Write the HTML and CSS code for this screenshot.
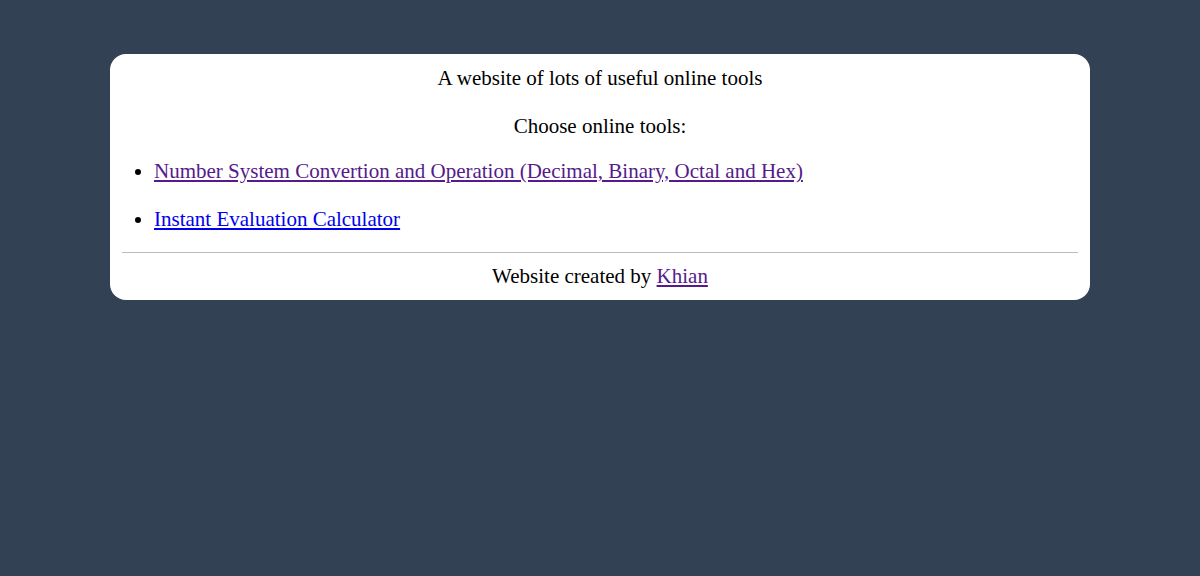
FILE: index.html
```html
<!DOCTYPE html>
<html>
<head>
<meta charset="utf-8">
<link rel="stylesheet" href="styles.css">
</head>
<body>
<div class="card">
  <p class="center">A website of lots of useful online tools</p>
  <p class="center choose">Choose online tools:</p>
  <ul class="tools">
    <li><a class="visited" href="#">Number System Convertion and Operation (Decimal, Binary, Octal and Hex)</a></li>
    <li><a class="link" href="#">Instant Evaluation Calculator</a></li>
  </ul>
  <hr class="rule">
  <div class="footer">Website created by <a class="visited" href="#">Khian</a></div>
</div>
</body>
</html>
```
FILE: styles.css
```css
html, body {
  margin: 0;
  padding: 0;
  background: #334155;
}
body {
  padding: 54px 110px;
  font-family: "Liberation Serif", "Times New Roman", serif;
  font-size: 21px;
  color: #000;
}
.card {
  background: #fff;
  border-radius: 16px;
  padding: 10px 12px;
  line-height: 28px;
}
.center {
  text-align: center;
  margin: 0 0 20px 0;
}
.choose {
  margin-bottom: 17px;
}
.tools {
  margin: 0 0 19px 0;
  padding-left: 32px;
}
.tools li {
  margin: 0 0 20px 0;
}
.tools li:last-child {
  margin-bottom: 0;
}
.visited { color: #551a8b; }
.link { color: #0000ee; }
.rule {
  border: 0;
  border-top: 1px solid #bbb;
  margin: 0 0 9px 0;
}
.footer {
  text-align: center;
}
```
